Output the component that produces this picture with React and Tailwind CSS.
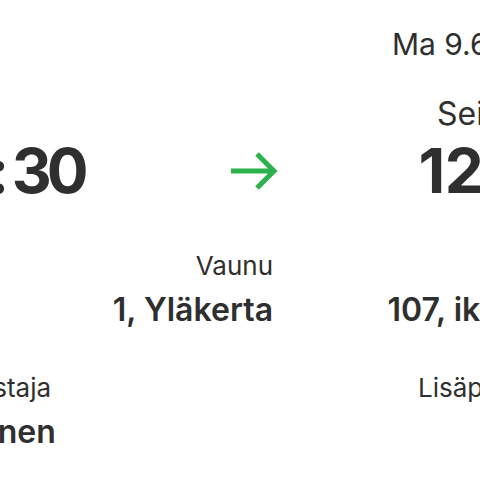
import React from 'react';

const ticket = {
  date: 'Ma 9.6.2025',
  from: { station: 'Oulu', hours: '10', minutes: '30' },
  to: { station: 'Seinäjoki', time: '12:45' },
};

const Arrow = () => (
  <svg width="48" height="40" viewBox="0 0 48 40" fill="none">
    <path d="M1 20H44M27 3L44 20L27 37" stroke="#2bb24c" strokeWidth="5" strokeLinejoin="miter" />
  </svg>
);

const Detail = ({ label, value, align = 'text-right', labelClass = '', valueClass = '' }) => (
  <div className={align}>
    <p className={`text-[26px] leading-[32px] font-normal ${labelClass}`}>{label}</p>
    <p className={`mt-[9px] text-[32px] leading-[38px] font-semibold ${valueClass}`}>{value}</p>
  </div>
);

const App = () => {
  return (
    <div
      className="w-[480px] h-[480px] overflow-hidden bg-white text-[#2f2f2f]"
      style={{ fontFamily: 'Inter, "Noto Sans", sans-serif' }}
    >
      <div className="ml-[-80px] w-[633px] pt-[27px]">
        {/* Date */}
        <div className="flex justify-end">
          <p className="mr-[-17px] text-[30px] leading-[34px]">{ticket.date}</p>
        </div>

        {/* Stations */}
        <div className="mt-[34px] flex justify-between">
          <p className="text-[32px] leading-[38px]">{ticket.from.station}</p>
          <p className="mr-[-20px] text-[32px] leading-[38px]">{ticket.to.station}</p>
        </div>

        {/* Times */}
        <div className="mt-[3px] grid grid-cols-[310px_48px_1fr] items-center">
          <p className="ml-[-1px] text-[62px] leading-[70px] font-bold tracking-[-0.5px] whitespace-nowrap">
            {ticket.from.hours}
            <span className="ml-[2px] mr-[3px]">:</span>
            <span className="tracking-[-5px]">{ticket.from.minutes}</span>
          </p>
          <Arrow />
          <p className="mr-[-31px] text-right text-[62px] leading-[70px] font-bold tracking-[-0.5px]">{ticket.to.time}</p>
        </div>

        {/* Details */}
        <div className="mt-[44px] grid grid-cols-[353px_1fr] gap-y-[43px]">
          <Detail label="Vaunu" value="1, Yläkerta" />
          <Detail label="Paikka" value="107, ikkuna" labelClass="mr-[-14px]" valueClass="mr-[-3px]" />
          <Detail label="Matkustaja" value="Virtanen" align="text-left" labelClass="ml-[-3px]" valueClass="ml-[3px]" />
          <Detail label="Lisäpalvelut" value="Ei" labelClass="mr-[-11px]" />
        </div>
      </div>
    </div>
  );
};

export default App;
